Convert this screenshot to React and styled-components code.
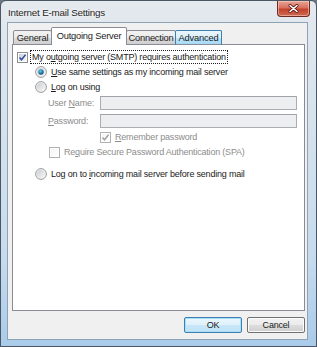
import styled, { createGlobalStyle } from 'styled-components'

const GlobalStyle = createGlobalStyle`
  html, body {
    margin: 0;
    padding: 0;
    background: #6b7785;
  }
  body {
    font-family: "Liberation Sans", Arial, sans-serif;
    font-size: 9px;
    letter-spacing: -0.2px;
    color: #1b1b1b;
  }
`

const Window = styled.div`
  box-sizing: border-box;
  width: 317px;
  height: 347px;
  display: flex;
  flex-direction: column;
  border: 1px solid #4a5663;
  border-radius: 6px 6px 0 0;
  background: linear-gradient(180deg, #e4e9ee 0%, #d6e2ec 35%, #c6dbee 75%, #a9cbe9 100%);
  padding: 0 8px 6px 6px;
`

const TitleBar = styled.div`
  height: 21px;
  display: flex;
  align-items: flex-start;
  justify-content: space-between;
`

const Title = styled.div`
  font-size: 9.8px;
  margin: 6px 0 0 1px;
  color: #1e1e1e;
  text-shadow: 0 0 6px #ffffff, 0 0 3px #ffffff;
`

const CloseButton = styled.div`
  width: 33px;
  height: 16px;
  margin-right: -2px;
  box-sizing: border-box;
  border: 1px solid #6e2a20;
  border-top: none;
  border-radius: 0 0 4px 4px;
  background: linear-gradient(180deg, #e7a596 0%, #d7705f 45%, #c2422c 55%, #cf6a52 100%);
  box-shadow: inset 0 0 0 1px rgba(255, 220, 210, 0.5);
  display: flex;
  align-items: center;
  justify-content: center;
`

const Client = styled.div`
  flex: 1;
  display: flex;
  flex-direction: column;
  background: #f0f0f0;
  border: 1px solid #8ea2b5;
  padding: 4px 2px 6px 4px;
`

const TabStrip = styled.div`
  display: flex;
  align-items: flex-end;
  height: 18px;
  padding-left: 1px;
  margin-bottom: -1px;
  position: relative;
  z-index: 1;
`

const Tab = styled.div`
  box-sizing: border-box;
  width: ${p => p.$w}px;
  height: ${p => (p.$active ? 18 : 15)}px;
  margin-left: ${p => (p.$first ? 0 : -1)}px;
  border: 1px solid ${p => (p.$hover ? '#3c7fb1' : '#898c95')};
  border-bottom: ${p => (p.$active ? 'none' : '1px solid #898c95')};
  border-radius: 2px 2px 0 0;
  background: ${p =>
    p.$active
      ? '#ffffff'
      : p.$hover
      ? 'linear-gradient(180deg, #eaf6fd 0%, #d9f0fc 50%, #bee6fd 51%, #a7d9f5 100%)'
      : 'linear-gradient(180deg, #f2f2f2 0%, #ebebeb 50%, #dddddd 51%, #cfcfcf 100%)'};
  display: flex;
  align-items: center;
  justify-content: center;
  font-size: 9.3px;
  padding-bottom: ${p => (p.$active ? 2 : 0)}px;
  position: relative;
  z-index: ${p => (p.$active ? 2 : 1)};
`

const Panel = styled.div`
  flex: 1;
  background: #ffffff;
  border: 1px solid #898c95;
  display: flex;
  flex-direction: column;
  padding: 5px 7px 0 4px;
`

const Row = styled.div`
  display: flex;
  align-items: center;
  height: 14px;
  margin-top: ${p => p.$top || 0}px;
  margin-left: ${p => p.$indent || 0}px;
  color: ${p => (p.$disabled ? '#8d8d8d' : '#1b1b1b')};
  gap: 3px;
`

const Label = styled.span`
  white-space: nowrap;
  padding: 0 1px;
  outline: ${p => (p.$focus ? '1px dotted #222' : 'none')};
  line-height: 12px;
`

const FieldLabel = styled.span`
  width: 49px;
  flex: none;
  color: #8d8d8d;
  white-space: nowrap;
`

const Field = styled.div`
  flex: 1;
  height: 14px;
  box-sizing: border-box;
  border: 1px solid #abadb3;
  border-top-color: #a0a3aa;
  background: #eceef0;
`

const ButtonRow = styled.div`
  display: flex;
  justify-content: flex-end;
  gap: 5px;
  margin-top: 6px;
`

const Button = styled.div`
  width: 58px;
  height: 16px;
  box-sizing: border-box;
  border: 1px solid ${p => (p.$default ? '#3c7fb1' : '#707070')};
  border-radius: 2px;
  background: ${p =>
    p.$default
      ? 'linear-gradient(180deg, #eaf6fd 0%, #e0f1fb 50%, #c8e7f9 51%, #bfe2f6 100%)'
      : 'linear-gradient(180deg, #f2f2f2 0%, #ebebeb 50%, #dddddd 51%, #cfcfcf 100%)'};
  box-shadow: inset 0 0 0 1px ${p => (p.$default ? '#a9dff8' : '#fcfcfc')};
  display: flex;
  align-items: center;
  justify-content: center;
  color: #1b1b1b;
`

const CheckBox = ({ checked, disabled }) => (
  <svg width="11" height="11" viewBox="0 0 11 11" style={{ flex: 'none' }}>
    <defs>
      <linearGradient id={disabled ? 'cbd' : 'cbe'} x1="0" y1="0" x2="1" y2="1">
        <stop offset="0" stopColor={disabled ? '#f4f4f4' : '#cbcfd5'} />
        <stop offset="1" stopColor={disabled ? '#ffffff' : '#f6f6f6'} />
      </linearGradient>
    </defs>
    <rect x="0.5" y="0.5" width="10" height="10" fill="#fff" stroke={disabled ? '#b1b1b1' : '#8e8f8f'} />
    <rect x="2" y="2" width="7" height="7" fill={`url(#${disabled ? 'cbd' : 'cbe'})`} />
    {checked && (
      <path
        d="M2.5 5.5 L4.5 7.8 L8.6 2.6"
        fill="none"
        stroke={disabled ? '#a0a0a0' : '#2a4c9a'}
        strokeWidth="1.5"
      />
    )}
  </svg>
)

const Radio = ({ checked }) => (
  <svg width="12" height="12" viewBox="0 0 12 12" style={{ flex: 'none' }}>
    <defs>
      <linearGradient id="rbg" x1="0" y1="0" x2="1" y2="1">
        <stop offset="0" stopColor="#c9cdd2" />
        <stop offset="1" stopColor="#f8f8f8" />
      </linearGradient>
      <radialGradient id="rdot" cx="0.4" cy="0.35" r="0.7">
        <stop offset="0" stopColor="#5fd0f0" />
        <stop offset="0.6" stopColor="#1f7aa8" />
        <stop offset="1" stopColor="#15405e" />
      </radialGradient>
    </defs>
    <circle cx="6" cy="6" r="5.4" fill="#f4f4f4" stroke="#8e8f8f" strokeWidth="0.9" />
    <circle cx="6" cy="6" r="4" fill="url(#rbg)" />
    {checked && <circle cx="6" cy="6" r="2.7" fill="url(#rdot)" />}
  </svg>
)

const tabs = [
  { name: 'General', w: 39 },
  { name: 'Outgoing Server', w: 76, active: true },
  { name: 'Connection', w: 50 },
  { name: 'Advanced', w: 47, hover: true },
]

export default function App() {
  return (
    <>
      <GlobalStyle />
      <Window>
        <TitleBar>
          <Title>Internet E-mail Settings</Title>
          <CloseButton>
            <svg width="11" height="9" viewBox="0 0 11 9">
              <path d="M2 1.5 L9 7.5 M9 1.5 L2 7.5" stroke="#5a1a12" strokeWidth="3" strokeLinecap="round" />
              <path d="M2 1.5 L9 7.5 M9 1.5 L2 7.5" stroke="#ffffff" strokeWidth="1.6" strokeLinecap="round" />
            </svg>
          </CloseButton>
        </TitleBar>
        <Client>
          <TabStrip>
            {tabs.map((t, i) => (
              <Tab key={t.name} $w={t.w} $active={t.active} $hover={t.hover} $first={i === 0}>
                {t.name}
              </Tab>
            ))}
          </TabStrip>
          <Panel>
            <Row>
              <CheckBox checked />
              <Label $focus>
                My o<u>u</u>tgoing server (SMTP) requires authentication
              </Label>
            </Row>
            <Row $top={1} $indent={18}>
              <Radio checked />
              <Label>
                <u>U</u>se same settings as my incoming mail server
              </Label>
            </Row>
            <Row $top={1} $indent={18}>
              <Radio />
              <Label>
                <u>L</u>og on using
              </Label>
            </Row>
            <Row $top={2} $indent={31}>
              <FieldLabel>
                User <u>N</u>ame:
              </FieldLabel>
              <Field />
            </Row>
            <Row $top={4} $indent={31}>
              <FieldLabel>
                <u>P</u>assword:
              </FieldLabel>
              <Field />
            </Row>
            <Row $top={2} $indent={83} $disabled>
              <CheckBox checked disabled />
              <Label>
                <u>R</u>emember password
              </Label>
            </Row>
            <Row $top={1} $indent={32} $disabled>
              <CheckBox disabled />
              <Label>
                Re<u>q</u>uire Secure Password Authentication (SPA)
              </Label>
            </Row>
            <Row $top={8} $indent={18}>
              <Radio />
              <Label>
                Log on to <u>i</u>ncoming mail server before sending mail
              </Label>
            </Row>
          </Panel>
          <ButtonRow>
            <Button $default>OK</Button>
            <Button>Cancel</Button>
          </ButtonRow>
        </Client>
      </Window>
    </>
  )
}
